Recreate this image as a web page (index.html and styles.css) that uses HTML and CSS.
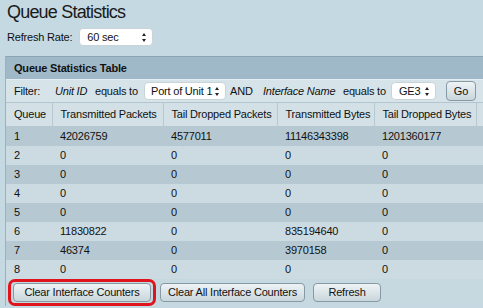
FILE: index.html
```html
<!DOCTYPE html>
<html>
<head>
  <title>Queue Statistics</title>
  <meta charset="UTF-8" />
  <meta name="viewport" content="width=device-width, initial-scale=1.0"/>
  <link rel="stylesheet" href="styles.css">
</head>
<body>
  <h1>Queue Statistics</h1>
  <div class="refresh">
    <span>Refresh Rate:</span>
    <span class="select sel-rate">60 sec <i class="arrows"></i></span>
  </div>

  <div class="panel">
    <div class="panel-title">Queue Statistics Table</div>
    <div class="filter">
      <span class="f-label">Filter:</span>
      <em class="f-unit">Unit ID</em>
      <span class="f-eq1">equals to</span>
      <span class="select sel-unit">Port of Unit 1 <i class="arrows"></i></span>
      <span class="f-and">AND</span>
      <em class="f-if">Interface Name</em>
      <span class="f-eq2">equals to</span>
      <span class="select sel-if">GE3 <i class="arrows"></i></span>
      <span class="btn btn-go">Go</span>
    </div>
    <table class="stats">
      <colgroup>
        <col class="c1"><col class="c2"><col class="c3"><col class="c4"><col class="c5"><col>
      </colgroup>
      <thead>
        <tr><th>Queue</th><th>Transmitted Packets</th><th>Tail Dropped Packets</th><th>Transmitted Bytes</th><th>Tail Dropped Bytes</th><th></th></tr>
      </thead>
      <tbody>
        <tr><td>1</td><td>42026759</td><td>4577011</td><td>11146343398</td><td>1201360177</td><td></td></tr>
        <tr><td>2</td><td>0</td><td>0</td><td>0</td><td>0</td><td></td></tr>
        <tr><td>3</td><td>0</td><td>0</td><td>0</td><td>0</td><td></td></tr>
        <tr><td>4</td><td>0</td><td>0</td><td>0</td><td>0</td><td></td></tr>
        <tr><td>5</td><td>0</td><td>0</td><td>0</td><td>0</td><td></td></tr>
        <tr><td>6</td><td>11830822</td><td>0</td><td>835194640</td><td>0</td><td></td></tr>
        <tr><td>7</td><td>46374</td><td>0</td><td>3970158</td><td>0</td><td></td></tr>
        <tr><td>8</td><td>0</td><td>0</td><td>0</td><td>0</td><td></td></tr>
      </tbody>
    </table>
    <div class="actions">
      <span class="highlight"><span class="btn btn-clear">Clear Interface Counters</span></span>
      <span class="btn btn-clear-all">Clear All Interface Counters</span>
      <span class="btn btn-refresh">Refresh</span>
    </div>
  </div>
</body>
</html>
```

FILE: styles.css
```css
html, body { margin: 0; padding: 0; overflow: hidden; }
body { font-family: "Liberation Sans", Arial, sans-serif; font-size: 11px; letter-spacing: -0.2px; color: #111; background: #c4d9e2; width: 483px; height: 308px; white-space: nowrap; }

h1 { font-size: 18px; letter-spacing: -0.8px; font-weight: normal; line-height: 22px; margin: 0; padding: 1px 0 0 7px; color: #1a1a1a; }

.refresh { display: flex; align-items: center; gap: 7px; padding-left: 7px; margin-top: 5px; height: 18px; }

.select { display: inline-flex; align-items: center; justify-content: space-between; box-sizing: border-box; height: 18px; padding: 0 5px 0 7px; background: #fff; border: 1px solid #c9d3d8; border-radius: 4px; }
.sel-rate { width: 74px; }
.sel-unit { width: 82px; padding-left: 6px; }
.sel-if { width: 45px; }
.arrows { display: inline-block; width: 5px; height: 9px; position: relative; }
.arrows::before, .arrows::after { content: ""; position: absolute; left: 0; border-left: 2.5px solid transparent; border-right: 2.5px solid transparent; }
.arrows::before { top: 0; border-bottom: 3.5px solid #222; }
.arrows::after { bottom: 0; border-top: 3.5px solid #222; }

.panel { margin: 10px 0 0 5px; width: 620px; border-left: 1px solid #9ab2bf; background: #c2d3dc; }
.panel-title { height: 22px; line-height: 22px; padding-left: 8px; font-weight: bold; background: #9fb9c8; border-top: 1px solid #8aa4b3; border-bottom: 1px solid #e4edf1; }

.filter { display: flex; align-items: center; height: 22px; padding-left: 8px; background: #d6e4ea; border-bottom: 1px solid #b3c6d0; }
.filter .f-label { width: 41px; }
.filter .f-unit { width: 40px; }
.filter .f-eq1 { width: 49px; }
.filter .f-and { width: 33px; margin-left: 4px; }
.filter .f-if { width: 80px; }
.filter .f-eq2 { width: 48px; }
.filter .btn-go { margin-left: 10px; }

.btn { display: inline-flex; align-items: center; justify-content: center; box-sizing: border-box; height: 19px; border: 1px solid #8799a3; border-radius: 4px; background: linear-gradient(#eef3f5, #c9d6dc); }
.btn-go { width: 30px; height: 20px; }

.stats { border-collapse: collapse; table-layout: fixed; width: 614px; }
.stats col.c1 { width: 46px; }
.stats col.c2 { width: 111px; }
.stats col.c3 { width: 114px; }
.stats col.c4 { width: 97px; }
.stats col.c5 { width: 102px; }
.stats th, .stats td { box-sizing: border-box; padding: 0 0 0 8px; overflow: hidden; }
.stats th { font-weight: normal; text-align: left; height: 23px; background: #d3e1e7; border-right: 1px solid #b7c8d1; border-bottom: 1px solid #b7c8d1; }
.stats td { height: 19px; line-height: 19px; }
.stats tbody tr:nth-child(odd) td { background: #b6c9d3; }
.stats tbody tr:nth-child(even) td { background: #ccdbe2; }

.actions { display: flex; align-items: center; padding: 0 0 0 2px; height: 27px; box-sizing: border-box; background: #c6d8e0; }
.highlight { display: inline-flex; padding: 1px 2px; border: 3px solid #e0141c; border-radius: 7px; }
.btn-clear { width: 138px; }
.btn-clear-all { width: 145px; margin-left: 4px; }
.btn-refresh { width: 68px; margin-left: 8px; }
```
